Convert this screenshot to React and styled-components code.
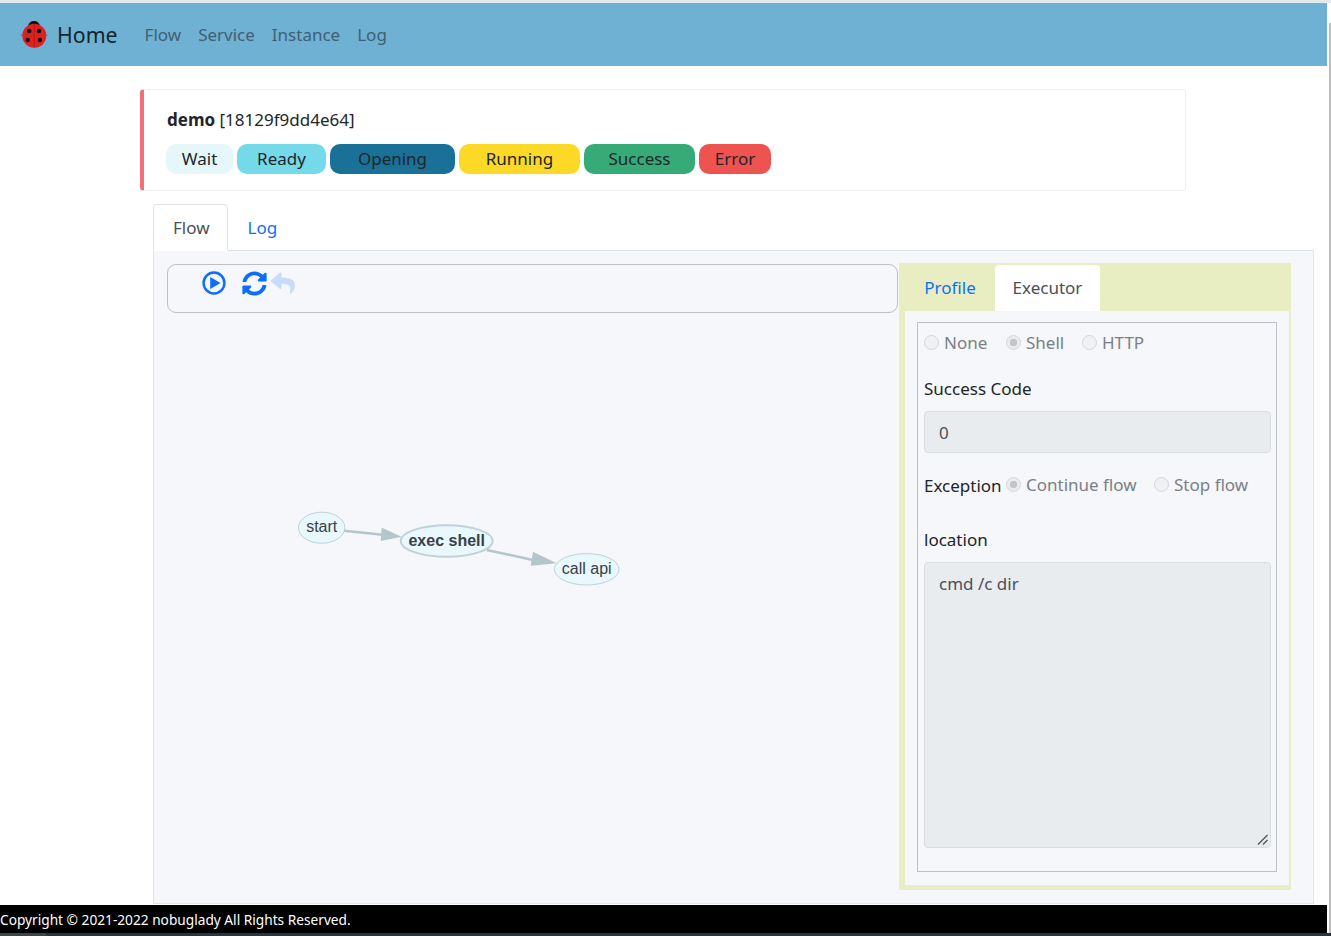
import React from 'react';
import styled, { createGlobalStyle } from 'styled-components';
import { FaReply } from 'react-icons/fa';

const GlobalStyle = createGlobalStyle`
  html, body {
    margin: 0;
    padding: 0;
    background: #fff;
    overflow: hidden;
  }
  * { box-sizing: border-box; }
  body {
    font-family: "Noto Sans", "Open Sans", "Liberation Sans", sans-serif;
    font-size: 17px;
    color: #212529;
  }
`;

const statuses = [
  { name: 'Wait', bg: '#e6f7fc', width: 67 },
  { name: 'Ready', bg: '#74d9e8', width: 89 },
  { name: 'Opening', bg: '#1a7198', width: 125 },
  { name: 'Running', bg: '#fbd926', width: 121 },
  { name: 'Success', bg: '#37ab77', width: 111 },
  { name: 'Error', bg: '#ef5350', width: 72 },
];

const Ladybug = () => (
  <svg width="28" height="30" viewBox="0 0 28 30">
    <path d="M0.5 15 H27.5" stroke="#444" strokeWidth="0.6" />
    <path d="M8 6.5 C8.5 -1 19.5 -1 20 6.5 Z" fill="#111" />
    <circle cx="14.3" cy="15.7" r="12" fill="#e02020" />
    <path d="M14.3 4 V27.5" stroke="#8a1212" strokeWidth="0.5" />
    <circle cx="9.3" cy="11" r="2.3" fill="#111" />
    <circle cx="19" cy="11" r="2.3" fill="#111" />
    <circle cx="7.7" cy="20" r="2.2" fill="#111" />
    <circle cx="20" cy="20" r="2.2" fill="#111" />
  </svg>
);

const PlayIcon = () => (
  <svg width="24" height="24" viewBox="0 0 24 24">
    <circle cx="12" cy="12" r="10.4" fill="none" stroke="#0d6efd" strokeWidth="2.5" />
    <path d="M8.2 6 L18.5 12 L8.2 18 Z" fill="#0d6efd" />
  </svg>
);

const SyncIcon = () => (
  <svg width="25" height="25" viewBox="0 0 512 512">
    <path
      fill="#0d6efd"
      d="M370.7 133.3C339.5 104 298.9 88 255.8 88c-77.5.1-144.3 53.2-162.8 126.9-1.3 5.4-6.1 9.1-11.6 9.1H24.1c-7.5 0-13.2-6.8-11.8-14.2C33.9 94.9 134.8 8 256 8c66.4 0 126.8 26.1 171.3 68.7L463 41c15.1-15.1 41-4.4 41 17v134c0 13.3-10.7 24-24 24H346c-21.4 0-32.1-25.9-17-41l41.7-41.7zM32 296h134c21.4 0 32.1 25.9 17 41l-41.7 41.7c31.2 29.3 71.8 45.3 114.9 45.3 77.4-.1 144.3-53.1 162.8-126.8 1.3-5.4 6.1-9.1 11.6-9.1h57.3c7.5 0 13.2 6.8 11.8 14.2C478.1 417.1 377.2 504 256 504c-66.4 0-126.8-26.1-171.3-68.7L49 471c-15.1 15.1-41 4.4-41-17V320c0-13.3 10.7-24 24-24z"
    />
  </svg>
);

const FlowGraph = () => (
  <GraphSvg width="340" height="100" viewBox="0 0 340 100">
    <g fill="#e8f8fd" stroke="#bfd2d8">
      <ellipse cx="41.7" cy="27.7" rx="23.2" ry="15.5" strokeWidth="1" />
      <ellipse cx="166.7" cy="41" rx="46" ry="15.8" strokeWidth="2" />
      <ellipse cx="306.7" cy="69.3" rx="32.3" ry="15.7" strokeWidth="1" />
    </g>
    <g stroke="#b3c6cb" strokeWidth="2.4" fill="#b3c6cb">
      <path d="M64 30.7 L103 34.7" fill="none" />
      <path d="M206.7 50 L253 60" fill="none" />
      <path stroke="none" d="M101.7 27.7 L121.7 36.7 L100.7 41 Z" />
      <path stroke="none" d="M253 51.7 L276.7 63.3 L250.7 65.7 Z" />
    </g>
    <GraphLabel x="41.7" y="32">start</GraphLabel>
    <GraphLabel x="166.7" y="46" $bold>exec shell</GraphLabel>
    <GraphLabel x="306.7" y="74">call api</GraphLabel>
  </GraphSvg>
);

const App = () => (
  <Screen>
    <GlobalStyle />
    <TopLine />
    <Body>
      <Main>
        <Navbar>
          <Brand>
            <Ladybug />
            <BrandText>Home</BrandText>
          </Brand>
          <NavLink>Flow</NavLink>
          <NavLink>Service</NavLink>
          <NavLink>Instance</NavLink>
          <NavLink>Log</NavLink>
        </Navbar>

        <Callout>
          <CalloutTitle>
            <b>demo</b> [18129f9dd4e64]
          </CalloutTitle>
          <Badges>
            {statuses.map((s) => (
              <Badge key={s.name} $bg={s.bg} $width={s.width}>
                {s.name}
              </Badge>
            ))}
          </Badges>
        </Callout>

        <Content>
          <Tabs>
            <Tab $active>Flow</Tab>
            <Tab>Log</Tab>
          </Tabs>
          <Pane>
            <Left>
              <Toolbar>
                <ToolButton $left={34}>
                  <PlayIcon />
                </ToolButton>
                <ToolButton $left={16}>
                  <SyncIcon />
                </ToolButton>
                <ToolButton $left={4}>
                  <FaReply size={24} color="#c5dcfb" />
                </ToolButton>
              </Toolbar>
              <Canvas>
                <FlowGraph />
              </Canvas>
            </Left>
            <Side>
              <SideTabs>
                <SideTab $width={90}>Profile</SideTab>
                <SideTab $width={105} $active>Executor</SideTab>
              </SideTabs>
              <SideBody>
                <Fieldset>
                  <RadioRow>
                    <Radio $width={82}>None</Radio>
                    <Radio $width={76} $checked>Shell</Radio>
                    <Radio>HTTP</Radio>
                  </RadioRow>
                  <FieldLabel>Success Code</FieldLabel>
                  <ValueBox>0</ValueBox>
                  <ExceptionRow>
                    <ExceptionLabel>Exception</ExceptionLabel>
                    <Radio $width={148} $checked>Continue flow</Radio>
                    <Radio>Stop flow</Radio>
                  </ExceptionRow>
                  <LocationLabel>location</LocationLabel>
                  <TextArea>
                    cmd /c dir
                    <Grip width="12" height="12" viewBox="0 0 12 12">
                      <path d="M1 10.5 L10.5 1 M6 10.5 L10.5 6" stroke="#555" strokeWidth="1.4" />
                    </Grip>
                  </TextArea>
                </Fieldset>
              </SideBody>
            </Side>
          </Pane>
        </Content>

        <Footer>Copyright © 2021-2022 nobuglady All Rights Reserved.</Footer>
      </Main>
      <Scrollbar />
    </Body>
    <BottomStrip />
  </Screen>
);

export default App;

const Screen = styled.div`
  width: 1331px;
  height: 936px;
  display: flex;
  flex-direction: column;
  overflow: hidden;
`;

const TopLine = styled.div`
  height: 3px;
  background: #e3eaed;
`;

const Body = styled.div`
  display: flex;
  flex: 1;
  min-height: 0;
`;

const Main = styled.div`
  width: 1327px;
  display: flex;
  flex-direction: column;
`;

const Scrollbar = styled.div`
  width: 2px;
  margin: 20px 0 0 2px;
  background: #bdbdbd;
`;

const Navbar = styled.nav`
  height: 63px;
  background: #6fb1d3;
  display: flex;
  align-items: center;
  padding-left: 20px;
  flex-shrink: 0;
`;

const Brand = styled.div`
  display: flex;
  align-items: center;
  gap: 9px;
  margin-right: 27px;
`;

const BrandText = styled.span`
  font-size: 21.3px;
  color: #15252f;
`;

const NavLink = styled.a`
  color: #3f6074;
  font-size: 17px;
  margin-right: 17px;
`;

const Callout = styled.div`
  margin: 23px 0 0 140px;
  width: 1046px;
  height: 102px;
  flex-shrink: 0;
  padding: 17px 22px 0;
  background: #fff;
  border: 1px solid #eef0f2;
  border-left: 4px solid #ef7076;
  border-radius: 4px;
`;

const CalloutTitle = styled.div`
  font-size: 17px;
  line-height: 26px;
  padding-left: 1px;
`;

const Badges = styled.div`
  display: flex;
  gap: 4px;
  margin-top: 11px;
`;

const Badge = styled.div`
  width: ${(p) => p.$width}px;
  height: 30px;
  padding-bottom: 2px;
  border-radius: 10px;
  background: ${(p) => p.$bg};
  display: flex;
  align-items: center;
  justify-content: center;
  font-size: 17px;
  color: #212529;
`;

const Content = styled.div`
  margin: 13px 13px 0 153px;
  flex: 1;
  min-height: 0;
  display: flex;
  flex-direction: column;
`;

const Tabs = styled.div`
  display: flex;
  height: 47px;
  flex-shrink: 0;
  border-bottom: 1px solid #dee2e6;
`;

const Tab = styled.div`
  height: 47px;
  padding: 0 17px 0 19px;
  display: flex;
  align-items: center;
  font-size: 17px;
  color: ${(p) => (p.$active ? '#495057' : '#0d6efd')};
  background: ${(p) => (p.$active ? '#fff' : 'transparent')};
  border: 1px solid ${(p) => (p.$active ? '#dee2e6' : 'transparent')};
  border-bottom-color: ${(p) => (p.$active ? '#fff' : 'transparent')};
  border-radius: 4px 4px 0 0;
`;

const Pane = styled.div`
  height: 653px;
  background: #f5f7fa;
  border: 1px solid #e3e6e9;
  border-top: none;
  display: flex;
  padding: 12px 0 0 13px;
`;

const Left = styled.div`
  width: 732px;
  display: flex;
  flex-direction: column;
`;

const Toolbar = styled.div`
  height: 49px;
  margin: 1px 1px 0 0;
  border: 1px solid #bdbfc2;
  border-radius: 9px;
  display: flex;
  align-items: flex-start;
  padding-top: 6px;
`;

const ToolButton = styled.div`
  margin-left: ${(p) => p.$left}px;
  display: flex;
`;

const Canvas = styled.div`
  flex: 1;
  padding: 187px 0 0 113px;
`;

const GraphSvg = styled.svg`
  display: block;
`;

const GraphLabel = styled.text`
  font-family: "Liberation Sans", Arial, sans-serif;
  font-size: 16px;
  font-weight: ${(p) => (p.$bold ? 700 : 400)};
  fill: #3a4046;
  text-anchor: middle;
`;

const Side = styled.div`
  width: 392px;
  height: 627px;
  background: #e8eec2;
  display: flex;
  flex-direction: column;
  padding-right: 1px;
`;

const SideTabs = styled.div`
  display: flex;
  height: 48px;
  padding: 2px 0 0 6px;
  flex-shrink: 0;
`;

const SideTab = styled.div`
  width: ${(p) => p.$width}px;
  height: 46px;
  padding-bottom: 2px;
  display: flex;
  align-items: center;
  justify-content: center;
  font-size: 17px;
  color: ${(p) => (p.$active ? '#495057' : '#0d6efd')};
  background: ${(p) => (p.$active ? '#fff' : 'transparent')};
  border-radius: 4px 4px 0 0;
`;

const SideBody = styled.div`
  flex: 1;
  margin: 0 1px 5px 6px;
  background: #f5f7fa;
  padding: 11px 12px 13px 12px;
  display: flex;
  min-height: 0;
`;

const Fieldset = styled.div`
  flex: 1;
  border: 1px solid #bdc0c4;
  padding: 0 5px 0 6px;
  display: flex;
  flex-direction: column;
`;

const RadioRow = styled.div`
  display: flex;
  align-items: center;
  height: 38px;
`;

const Radio = styled.div`
  display: flex;
  align-items: center;
  gap: 5px;
  width: ${(p) => (p.$width ? `${p.$width}px` : 'auto')};
  font-size: 17px;
  color: #7a8086;
  &::before {
    content: '';
    width: 13px;
    height: 13px;
    flex-shrink: 0;
    border-radius: 50%;
    border: 1px solid #d4d6d8;
    background: ${(p) =>
      p.$checked ? 'radial-gradient(circle, #c3c5c7 0 3.5px, #eaebec 4px)' : '#f0f1f2'};
  }
`;

const FieldLabel = styled.div`
  margin-top: 15px;
  height: 26px;
  line-height: 26px;
  font-size: 17px;
`;

const ValueBox = styled.div`
  margin-top: 9px;
  height: 42px;
  background: #e9ecef;
  border: 1px solid #dadde0;
  border-radius: 4px;
  display: flex;
  align-items: center;
  padding-left: 14px;
  font-size: 17px;
  color: #495057;
`;

const ExceptionRow = styled.div`
  display: flex;
  align-items: center;
  margin-top: 18px;
  height: 28px;
  ${Radio} {
    margin-bottom: 2px;
  }
`;

const ExceptionLabel = styled.span`
  width: 82px;
  font-size: 17px;
`;

const LocationLabel = styled.div`
  margin-top: 28px;
  height: 26px;
  line-height: 26px;
  font-size: 17px;
`;

const TextArea = styled.div`
  position: relative;
  margin-top: 9px;
  height: 286px;
  background: #e9ecef;
  border: 1px solid #dadde0;
  border-radius: 4px;
  padding: 9px 14px;
  font-size: 17px;
  color: #495057;
`;

const Grip = styled.svg`
  position: absolute;
  right: 1px;
  bottom: 1px;
`;

const Footer = styled.footer`
  margin-top: auto;
  height: 28px;
  background: #000;
  color: #fff;
  font-size: 13.7px;
  line-height: 30px;
  white-space: nowrap;
`;

const BottomStrip = styled.div`
  height: 3px;
  background: linear-gradient(to right, #3a4648 0 46px, #26363d 46px);
`;
